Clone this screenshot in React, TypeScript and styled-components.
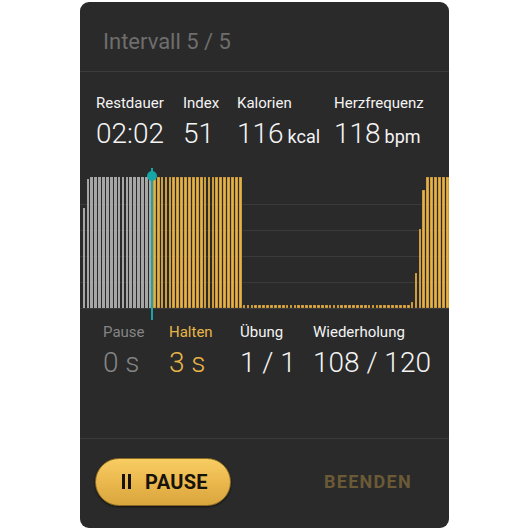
import styled, { createGlobalStyle } from 'styled-components';

const GlobalStyle = createGlobalStyle`
    html, body {
        margin: 0;
        padding: 0;
        background: #ffffff;
    }
    body {
        font-family: Roboto, "Liberation Sans", Arial, sans-serif;
    }
`;

const Card = styled.div`
    margin: 2px 0 0 80px;
    width: 369px;
    height: 526px;
    background-color: #2a2a2a;
    border-radius: 9px;
    overflow: hidden;
    display: flex;
    flex-direction: column;
`;

const Header = styled.div`
    height: 70px;
    display: flex;
    align-items: center;
    padding-left: 23px;
    padding-top: 10px;
    box-sizing: border-box;
    font-size: 22px;
    color: #6e6e6e;
    border-bottom: 1px solid #3b3b3b;
`;

const StatsRow = styled.div<{ $cols: string; $pad: number }>`
    display: grid;
    grid-template-columns: ${props => props.$cols};
    padding-left: ${props => props.$pad}px;
`;

const Stat = styled.div`
    display: flex;
    flex-direction: column;
`;

const Label = styled.div<{ $color: string }>`
    font-size: 15px;
    font-weight: 400;
    color: ${props => props.$color};
    line-height: 20px;
    white-space: nowrap;
`;

const Value = styled.div<{ $color: string }>`
    margin-top: 4px;
    font-size: 28px;
    font-weight: 300;
    color: ${props => props.$color};
    line-height: 34px;
    white-space: nowrap;
`;

const Unit = styled.span`
    font-size: 18px;
    font-weight: 400;
    margin-left: 4px;
`;

const TopStats = styled(StatsRow)`
    margin-top: 21px;
    height: 76px;
`;

const BottomStats = styled(StatsRow)`
    margin-top: 13px;
    height: 116px;
    border-bottom: 1px solid #3b3b3b;
`;

const Chart = styled.div`
    position: relative;
    height: 140px;
    padding: 8px 0 1px 2px;
    box-sizing: border-box;
    display: flex;
    align-items: flex-end;
    background-image: repeating-linear-gradient(
        to bottom,
        transparent 0px,
        transparent 25px,
        #3a3a3a 25px,
        #3a3a3a 26px
    );
    background-position: 0 10px;
    background-size: 100% 130px;
    background-repeat: no-repeat;
`;

const Bar = styled.div<{ $tone: 'done' | 'active' }>`
    flex: 1;
    margin: 0 0.6px;
    background-color: ${props => (props.$tone === 'done' ? '#a6a6a6' : '#e6b146')};
    box-shadow: ${props => (props.$tone === 'done' ? 'none' : 'inset 0 0 0 0.5px #b88a32')};
`;

const Cursor = styled.div`
    position: absolute;
    left: 71px;
    top: -1px;
    width: 2px;
    height: 152px;
    background-color: #17a6a7;
    z-index: 2;

    &::after {
        content: '';
        position: absolute;
        left: -4px;
        top: 3px;
        width: 10px;
        height: 10px;
        border-radius: 50%;
        background-color: #17a6a7;
    }
`;

const Footer = styled.div`
    flex: 1;
    display: flex;
    align-items: center;
    padding: 0 0 4px 15px;
`;

const PauseButton = styled.button`
    width: 136px;
    height: 48px;
    border-radius: 24px;
    border: 1px solid #8a6a22;
    background: linear-gradient(to bottom, #f8cd62 0%, #e9b64c 55%, #d9a53e 100%);
    box-shadow: 0 1px 2px rgba(0, 0, 0, 0.6);
    display: flex;
    align-items: center;
    justify-content: center;
    gap: 14px;
    font-family: Roboto, "Liberation Sans", Arial, sans-serif;
    font-size: 20px;
    font-weight: 700;
    letter-spacing: 0.3px;
    color: #17120a;
    cursor: pointer;
    padding: 0 0 0 4px;
`;

const PauseIcon = styled.span`
    display: flex;
    gap: 3px;

    &::before, &::after {
        content: '';
        width: 3px;
        height: 15px;
        background-color: #17120a;
    }
`;

const EndButton = styled.button`
    margin-left: auto;
    width: 162px;
    background: none;
    border: none;
    font-family: Roboto, "Liberation Sans", Arial, sans-serif;
    font-size: 18px;
    font-weight: 700;
    letter-spacing: 1.3px;
    color: #6b5a36;
    cursor: pointer;
    padding: 0;
`;

const FULL = 131;

const bars: { h: number; tone: 'done' | 'active' }[] = [
    { h: 100, tone: 'done' },
    { h: 129, tone: 'done' },
    ...Array.from({ length: 16 }, () => ({ h: FULL, tone: 'done' as const })),
    ...Array.from({ length: 23 }, () => ({ h: FULL, tone: 'active' as const })),
    ...Array.from({ length: 43 }, () => ({ h: 3, tone: 'active' as const })),
    ...[6, 35, 79, 118].map(h => ({ h, tone: 'active' as const })),
    ...Array.from({ length: 6 }, () => ({ h: FULL, tone: 'active' as const })),
];

const App = () => {
    return (
        <>
            <GlobalStyle />
            <Card>
                <Header>Intervall 5 / 5</Header>

                <TopStats $cols="87px 54px 97px auto" $pad={16}>
                    <Stat>
                        <Label $color="#f4f4f4">Restdauer</Label>
                        <Value $color="#f4f4f4">02:02</Value>
                    </Stat>
                    <Stat>
                        <Label $color="#f4f4f4">Index</Label>
                        <Value $color="#f4f4f4">51</Value>
                    </Stat>
                    <Stat>
                        <Label $color="#f4f4f4">Kalorien</Label>
                        <Value $color="#f4f4f4">116<Unit>kcal</Unit></Value>
                    </Stat>
                    <Stat>
                        <Label $color="#f4f4f4">Herzfrequenz</Label>
                        <Value $color="#f4f4f4">118<Unit>bpm</Unit></Value>
                    </Stat>
                </TopStats>

                <Chart>
                    {bars.map((b, i) => (
                        <Bar key={i} $tone={b.tone} style={{ height: b.h }} />
                    ))}
                    <Cursor />
                </Chart>

                <BottomStats $cols="66px 71px 73px auto" $pad={23}>
                    <Stat>
                        <Label $color="#858585">Pause</Label>
                        <Value $color="#858585">0 s</Value>
                    </Stat>
                    <Stat>
                        <Label $color="#e9b548">Halten</Label>
                        <Value $color="#e9b548">3 s</Value>
                    </Stat>
                    <Stat>
                        <Label $color="#f4f4f4">Übung</Label>
                        <Value $color="#f4f4f4">1 / 1</Value>
                    </Stat>
                    <Stat>
                        <Label $color="#f4f4f4">Wiederholung</Label>
                        <Value $color="#f4f4f4">108 / 120</Value>
                    </Stat>
                </BottomStats>

                <Footer>
                    <PauseButton>
                        <PauseIcon />
                        PAUSE
                    </PauseButton>
                    <EndButton>BEENDEN</EndButton>
                </Footer>
            </Card>
        </>
    );
};

export default App;
